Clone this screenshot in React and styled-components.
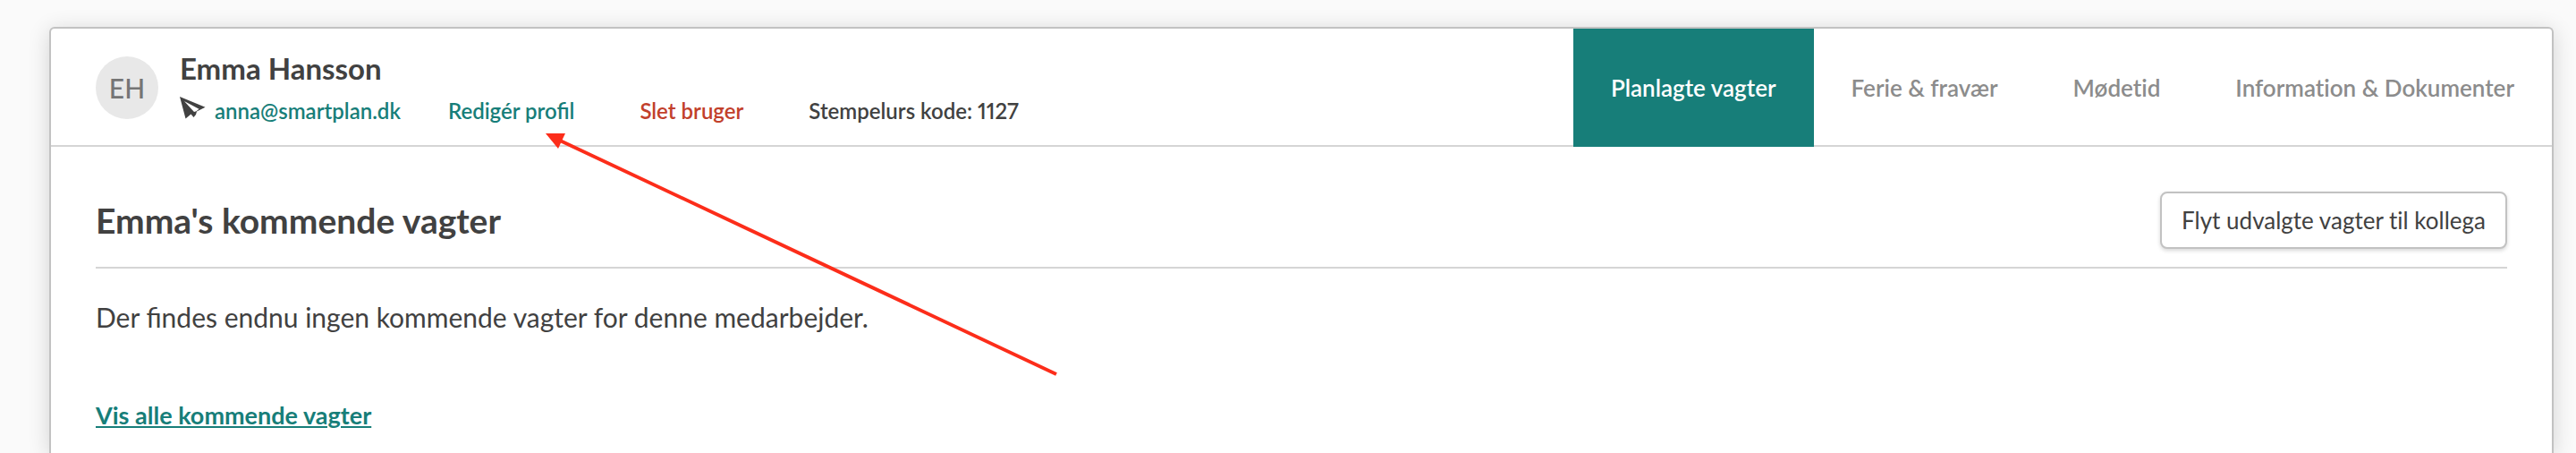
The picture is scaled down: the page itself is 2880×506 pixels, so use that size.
import React from 'react';
import styled, { createGlobalStyle } from 'styled-components';

const GlobalStyle = createGlobalStyle`
  * {
    box-sizing: border-box;
  }

  body {
    margin: 0;
    background: #fafafa;
    color: #414141;
    font-family: Lato, "Open Sans", sans-serif;
    font-size: 26px;
    line-height: 32px;
  }
`;

const Page = styled.div`
  position: relative;
  display: flex;
  flex-direction: column;
  min-height: 100vh;
  padding: 30px 25px 0 55px;
`;

const Card = styled.main`
  flex: 1;
  background: #fff;
  border: 2px solid #c2c2c2;
  border-bottom: 0;
  border-radius: 6px 6px 0 0;
  box-shadow: 0 4px 24px rgba(0, 0, 0, 0.16);
`;

const Header = styled.header`
  display: flex;
  justify-content: space-between;
  border-bottom: 2px solid #d5d5d5;
`;

const Profile = styled.div`
  display: flex;
  align-items: center;
  gap: 24px;
  padding: 24px 0 22px 50px;
`;

const Avatar = styled.div`
  display: flex;
  align-items: center;
  justify-content: center;
  width: 70px;
  height: 70px;
  border-radius: 50%;
  background: #e8e8e8;
  color: #757575;
  font-size: 30px;
  font-weight: 500;
`;

const Name = styled.h1`
  margin: 0 0 12px;
  font-size: 33px;
  line-height: 40px;
  font-weight: 700;
`;

const Details = styled.div`
  display: flex;
  gap: 73px;
  font-size: 24px;
  line-height: 32px;
  font-weight: 600;
  font-variant-numeric: proportional-nums;
  white-space: nowrap;
`;

const Contact = styled.div`
  display: flex;
  gap: 53px;
`;

const Mail = styled.div`
  display: flex;
  align-items: flex-start;
  gap: 10px;
`;

const PlaneIcon = styled.svg`
  width: 29px;
  height: 28px;
  fill: #414141;
`;

const Link = styled.a`
  color: ${props => (props.$danger ? '#c2402b' : '#177e79')};
  text-decoration: none;
`;

const Tabs = styled.nav`
  display: flex;
  margin-bottom: -2px;
`;

const Tab = styled.a`
  display: flex;
  align-items: center;
  padding: 0 42px;
  background: ${props => (props.$active ? '#177e79' : 'transparent')};
  color: ${props => (props.$active ? '#fff' : '#8c8c8c')};
  font-weight: 600;
  font-variant-ligatures: none;
  text-decoration: none;
  white-space: nowrap;
`;

const Content = styled.section`
  padding: 50px 50px 0;
`;

const TitleRow = styled.div`
  display: flex;
  align-items: center;
  justify-content: space-between;
  padding-bottom: 20px;
  border-bottom: 2px solid #d5d5d5;
`;

const Title = styled.h2`
  margin: 0;
  font-size: 39px;
  line-height: 44px;
  font-weight: 700;
`;

const Button = styled.button`
  height: 64px;
  padding: 0 22px;
  background: #fff;
  border: 2px solid #c2c2c2;
  border-radius: 8px;
  box-shadow: 0 2px 4px rgba(0, 0, 0, 0.16);
  color: #414141;
  font-family: inherit;
  font-size: 26px;
  font-variant-ligatures: none;
  cursor: pointer;
`;

const Message = styled.p`
  margin: 36px 0 76px;
  font-size: 30px;
  line-height: 36px;
`;

const ShowAll = styled.a`
  color: #177e79;
  font-size: 27px;
  font-weight: 700;
  text-decoration: underline;
  text-decoration-thickness: 2px;
  text-underline-offset: 2px;
`;

const Arrow = styled.svg`
  position: absolute;
  top: 148px;
  left: 609px;
  width: 576px;
  height: 276px;
  pointer-events: none;
`;

const tabs = [
  'Planlagte vagter',
  'Ferie & fravær',
  'Mødetid',
  'Information & Dokumenter'
];

class App extends React.Component {
  constructor(props) {
    super(props);
    this.state = {
      active: tabs[0]
    };
  }

  handleTabClick(event, tab) {
    event.preventDefault();
    this.setState({ active: tab });
  }

  render() {
    return (
      <Page>
        <GlobalStyle />
        <Card>
          <Header>
            <Profile>
              <Avatar>EH</Avatar>
              <div>
                <Name>Emma Hansson</Name>
                <Details>
                  <Contact>
                    <Mail>
                      <PlaneIcon viewBox="0 0 29 28" aria-hidden="true">
                        <path d="M0 0 L28.5 11.7 L19 16.5 L18 20 L15.5 23 L12.5 19.5 L6.5 24.5 Z" />
                        <path d="M5 5 L21.5 13.8 L18.5 16.2 L16 17 Z" fill="#fff" />
                      </PlaneIcon>
                      <Link href="mailto:anna@smartplan.dk">anna@smartplan.dk</Link>
                    </Mail>
                    <Link href="#edit">Redigér profil</Link>
                  </Contact>
                  <Link href="#delete" $danger>Slet bruger</Link>
                  <span>Stempelurs kode: 1127</span>
                </Details>
              </div>
            </Profile>
            <Tabs>
              {tabs.map(tab => (
                <Tab
                  key={tab}
                  href="#tab"
                  $active={this.state.active === tab}
                  onClick={event => this.handleTabClick(event, tab)}
                >
                  {tab}
                </Tab>
              ))}
            </Tabs>
          </Header>
          <Content>
            <TitleRow>
              <Title>Emma's kommende vagter</Title>
              <Button type="button">Flyt udvalgte vagter til kollega</Button>
            </TitleRow>
            <Message>Der findes endnu ingen kommende vagter for denne medarbejder.</Message>
            <ShowAll href="#all">Vis alle kommende vagter</ShowAll>
          </Content>
        </Card>
        <Arrow viewBox="0 0 576 276" aria-hidden="true">
          <path d="M15 8 L572 270" stroke="#fc2d1a" strokeWidth="4" />
          <path d="M1 1 L23 1 L15 18 Z" fill="#fc2d1a" />
        </Arrow>
      </Page>
    );
  }
}

export default App;
